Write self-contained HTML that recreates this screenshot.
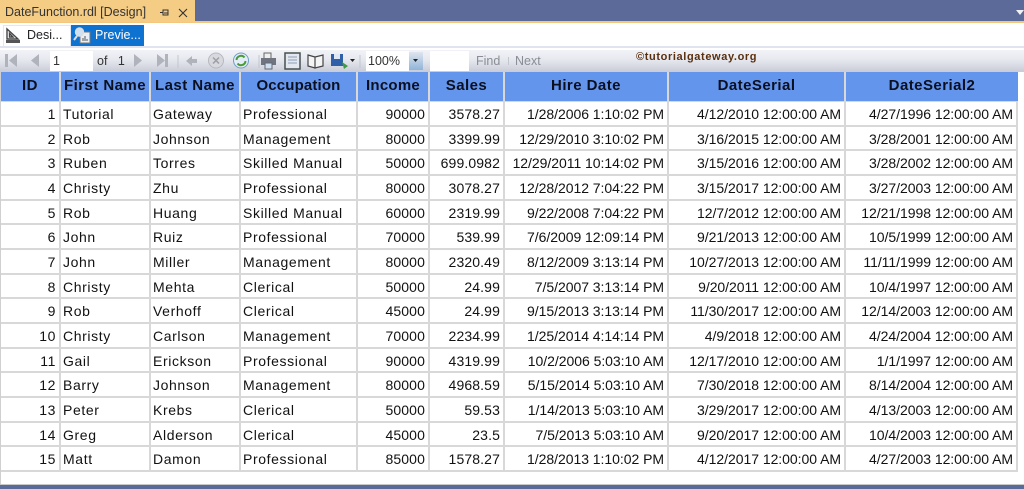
<!DOCTYPE html>
<html><head><meta charset="utf-8"><style>
html,body{margin:0;padding:0;background:#fff}
#p{position:relative;width:1024px;height:489px;overflow:hidden;background:#fff;font-family:"Liberation Sans",sans-serif}
.a{position:absolute}
#g{position:absolute;left:1px;top:72px;display:grid;grid-template-columns:60px 90px 90px 117px 72px 75px 164px 177px 172px;grid-template-rows:30px repeat(15,24.67px);font-size:14px;letter-spacing:.62px;color:#111}
#g div{box-sizing:border-box;border-right:2px solid #d8d8d8;border-bottom:2px solid #d8d8d8;padding:0 2px;white-space:nowrap;overflow:hidden;line-height:24px}
#g .r{text-align:right;padding-right:3px}
#g div:nth-child(9n+5),#g div:nth-child(9n+6){letter-spacing:.12px}
#g div:nth-child(9n+7),#g div:nth-child(9n+8),#g div:nth-child(9n){letter-spacing:-.04px}
#g div.h{background:#6495ed;font-weight:bold;text-align:center;color:#0b1020;font-size:15px;letter-spacing:.45px;line-height:28px;border-bottom:1px solid #d8d8d8;padding:0}
#g div.h.l{border-right:0}
</style></head><body><div id="p">
<div class="a" style="left:0;top:0;width:1024px;height:21px;background:#5c6a99"></div>
<div class="a" style="left:0;top:21px;width:1024px;height:2px;background:#f5c77e"></div>
<div class="a" style="left:0;top:0;width:195px;height:22px;background:#f5cc84"></div>
<div class="a" style="left:5px;top:5px;font-size:12.5px;color:#333;white-space:nowrap">DateFunction.rdl [Design]</div>
<svg class="a" style="left:158px;top:6px" width="32" height="14" viewBox="0 0 32 14"><path d="M2 6.500h3M5 3.500v6M5 4h5v5H5M6 7h4" fill="none" stroke="#333" stroke-width="1"/><path d="M21 3l8 8M29 3l-8 8" stroke="#333" stroke-width="1.100"/></svg>
<svg class="a" style="left:1016px;top:10px" width="8" height="6"><path d="M0 0h8L4 5z" fill="#f0f0f5"/></svg>

<div class="a" style="left:3px;top:25px;width:68px;height:21px;background:#fff;border:1px solid #e4e7ef;border-bottom:0;box-sizing:border-box"></div>
<svg class="a" style="left:5px;top:27px" width="17" height="17" viewBox="0 0 17 17"><path d="M2 2v10h11zM4.500 6.500v3.500h3.500z" fill="none" stroke="#444" stroke-width="1.400"/><rect x="1" y="13" width="14" height="3" fill="#555"/></svg>
<div class="a" style="left:27px;top:28px;font-size:12.500px;color:#222">Desi...</div>
<div class="a" style="left:71px;top:25px;width:73px;height:21px;background:#0e72d0"></div>
<svg class="a" style="left:73px;top:26px" width="19" height="19" viewBox="0 0 19 19"><rect x="7" y="6" width="10" height="11" fill="#e8eef5" stroke="#777"/><circle cx="6.500" cy="6" r="4" fill="#cfe0f2" stroke="#ddd" stroke-width="1.400"/><path d="M4 10l-3 4" stroke="#ddd" stroke-width="2"/><path d="M10 15v-3M12 15v-5M14 15v-2" stroke="#555"/></svg>
<div class="a" style="left:95px;top:28px;font-size:12.500px;color:#fff">Previe...</div>
<div class="a" style="left:0;top:46px;width:1024px;height:2px;background:#e1e4ee"></div>

<div class="a" style="left:0;top:50px;width:1024px;height:22px;background:linear-gradient(#f2f3f7,#e6e8ef 45%,#c8cbd6)"></div>
<div class="a" style="left:50px;top:51px;width:43px;height:20px;background:#fff"></div>
<div class="a" style="left:430px;top:51px;width:39px;height:20px;background:#fff"></div>
<div class="a" style="left:366px;top:51px;width:43px;height:20px;background:#fff"></div>
<div class="a" style="left:409px;top:52px;width:14px;height:18px;background:linear-gradient(#dfe5ee,#8fb4d8)"></div>
<svg class="a" style="left:0;top:50px" width="450" height="22" viewBox="0 0 450 22">
<g fill="#b0b3bb"><rect x="5" y="4" width="3" height="13"/><path d="M17 4v13l-8-6.500z"/><path d="M39 4v13l-8-6.500z"/><path d="M134 4v13l8-6.500z"/><path d="M157 4v13l8-6.500z"/><rect x="165" y="4" width="3" height="13"/><path d="M186 11l6-5v3h5v4h-5v3z"/></g>
<path d="M178 5v13M259 5v13M360 5v13" stroke="#c4c6cf"/>
<circle cx="216" cy="10.500" r="7.500" fill="#d8d9de" stroke="#b6b8c0"/><path d="M213 7.500l6 6M219 7.500l-6 6" stroke="#9d9fa8" stroke-width="1.500"/>
<circle cx="241" cy="10.500" r="7.500" fill="#e3edf6" stroke="#6d9fc4"/><path d="M236.500 10a4.500 4.500 0 0 1 8-2.500" fill="none" stroke="#4a9a3a" stroke-width="2"/><path d="M245.500 11a4.500 4.500 0 0 1-8 2.500" fill="none" stroke="#4a9a3a" stroke-width="2"/>
<rect x="264" y="3" width="7" height="6" fill="#eee" stroke="#666"/><rect x="261" y="8" width="15" height="7" fill="#6f7480"/><rect x="265" y="13" width="7" height="6" fill="#cfe0f0" stroke="#667"/>
<rect x="285" y="3" width="15" height="16" fill="#e3e8f0" stroke="#47504f" stroke-width="1.500"/><path d="M288 7h9M288 10h9M288 13h9" stroke="#8b9cb5"/>
<path d="M308 5l7 2v11l-7-2zM315 7l8-2v11l-8 2z" fill="#f4f4f4" stroke="#444" stroke-width="1.200"/>
<rect x="331" y="4" width="12" height="12" fill="#2f5fa8"/><rect x="334" y="4" width="6" height="5" fill="#dfe7f2"/><path d="M342 12l6 4-4 3z" fill="#3f9a45"/>
<path d="M350 9h5l-2.500 3z" fill="#222"/>
<path d="M413 9h5l-2.500 3z" fill="#222"/>
</svg>
<div class="a" style="left:53px;top:54px;font-size:12.500px;color:#333">1</div>
<div class="a" style="left:97px;top:54px;font-size:12.500px;color:#333;word-spacing:7px">of 1</div>
<div class="a" style="left:368px;top:54px;font-size:12.500px;color:#333">100%</div>
<div class="a" style="left:476px;top:54px;font-size:12.500px;color:#8b8d96">Find</div>
<div class="a" style="left:515px;top:54px;font-size:12.500px;color:#8b8d96">Next</div>
<div class="a" style="left:508px;top:57px;width:1px;height:8px;background:#c4c6cf"></div>
<div class="a" style="left:636px;top:51px;font-size:11px;font-weight:bold;color:#5a2f10;letter-spacing:.62px;white-space:nowrap">©tutorialgateway.org</div>

<div id="g">
<div class="h">ID</div><div class="h">First Name</div><div class="h">Last Name</div><div class="h" style="letter-spacing:.15px">Occupation</div><div class="h" style="letter-spacing:.25px">Income</div><div class="h">Sales</div><div class="h">Hire Date</div><div class="h">DateSerial</div><div class="h l">DateSerial2</div>
<div class="r">1</div><div>Tutorial</div><div>Gateway</div><div>Professional</div><div class="r">90000</div><div class="r">3578.27</div><div class="r">1/28/2006 1:10:02 PM</div><div class="r">4/12/2010 12:00:00 AM</div><div class="r">4/27/1996 12:00:00 AM</div>
<div class="r">2</div><div>Rob</div><div>Johnson</div><div>Management</div><div class="r">80000</div><div class="r">3399.99</div><div class="r">12/29/2010 3:10:02 PM</div><div class="r">3/16/2015 12:00:00 AM</div><div class="r">3/28/2001 12:00:00 AM</div>
<div class="r">3</div><div>Ruben</div><div>Torres</div><div>Skilled Manual</div><div class="r">50000</div><div class="r">699.0982</div><div class="r">12/29/2011 10:14:02 PM</div><div class="r">3/15/2016 12:00:00 AM</div><div class="r">3/28/2002 12:00:00 AM</div>
<div class="r">4</div><div>Christy</div><div>Zhu</div><div>Professional</div><div class="r">80000</div><div class="r">3078.27</div><div class="r">12/28/2012 7:04:22 PM</div><div class="r">3/15/2017 12:00:00 AM</div><div class="r">3/27/2003 12:00:00 AM</div>
<div class="r">5</div><div>Rob</div><div>Huang</div><div>Skilled Manual</div><div class="r">60000</div><div class="r">2319.99</div><div class="r">9/22/2008 7:04:22 PM</div><div class="r">12/7/2012 12:00:00 AM</div><div class="r">12/21/1998 12:00:00 AM</div>
<div class="r">6</div><div>John</div><div>Ruiz</div><div>Professional</div><div class="r">70000</div><div class="r">539.99</div><div class="r">7/6/2009 12:09:14 PM</div><div class="r">9/21/2013 12:00:00 AM</div><div class="r">10/5/1999 12:00:00 AM</div>
<div class="r">7</div><div>John</div><div>Miller</div><div>Management</div><div class="r">80000</div><div class="r">2320.49</div><div class="r">8/12/2009 3:13:14 PM</div><div class="r">10/27/2013 12:00:00 AM</div><div class="r">11/11/1999 12:00:00 AM</div>
<div class="r">8</div><div>Christy</div><div>Mehta</div><div>Clerical</div><div class="r">50000</div><div class="r">24.99</div><div class="r">7/5/2007 3:13:14 PM</div><div class="r">9/20/2011 12:00:00 AM</div><div class="r">10/4/1997 12:00:00 AM</div>
<div class="r">9</div><div>Rob</div><div>Verhoff</div><div>Clerical</div><div class="r">45000</div><div class="r">24.99</div><div class="r">9/15/2013 3:13:14 PM</div><div class="r">11/30/2017 12:00:00 AM</div><div class="r">12/14/2003 12:00:00 AM</div>
<div class="r">10</div><div>Christy</div><div>Carlson</div><div>Management</div><div class="r">70000</div><div class="r">2234.99</div><div class="r">1/25/2014 4:14:14 PM</div><div class="r">4/9/2018 12:00:00 AM</div><div class="r">4/24/2004 12:00:00 AM</div>
<div class="r">11</div><div>Gail</div><div>Erickson</div><div>Professional</div><div class="r">90000</div><div class="r">4319.99</div><div class="r">10/2/2006 5:03:10 AM</div><div class="r">12/17/2010 12:00:00 AM</div><div class="r">1/1/1997 12:00:00 AM</div>
<div class="r">12</div><div>Barry</div><div>Johnson</div><div>Management</div><div class="r">80000</div><div class="r">4968.59</div><div class="r">5/15/2014 5:03:10 AM</div><div class="r">7/30/2018 12:00:00 AM</div><div class="r">8/14/2004 12:00:00 AM</div>
<div class="r">13</div><div>Peter</div><div>Krebs</div><div>Clerical</div><div class="r">50000</div><div class="r">59.53</div><div class="r">1/14/2013 5:03:10 AM</div><div class="r">3/29/2017 12:00:00 AM</div><div class="r">4/13/2003 12:00:00 AM</div>
<div class="r">14</div><div>Greg</div><div>Alderson</div><div>Clerical</div><div class="r">45000</div><div class="r">23.5</div><div class="r">7/5/2013 5:03:10 AM</div><div class="r">9/20/2017 12:00:00 AM</div><div class="r">10/4/2003 12:00:00 AM</div>
<div class="r">15</div><div>Matt</div><div>Damon</div><div>Professional</div><div class="r">85000</div><div class="r">1578.27</div><div class="r">1/28/2013 1:10:02 PM</div><div class="r">4/12/2017 12:00:00 AM</div><div class="r">4/27/2003 12:00:00 AM</div>
</div>
<div class="a" style="left:0;top:72px;width:1px;height:413px;background:#d0d0d0"></div>
<div class="a" style="left:0;top:484px;width:1024px;height:1px;background:#c9c9c9"></div>
<div class="a" style="left:0;top:485px;width:1024px;height:4px;background:#5c6a99"></div>
</div></body></html>
